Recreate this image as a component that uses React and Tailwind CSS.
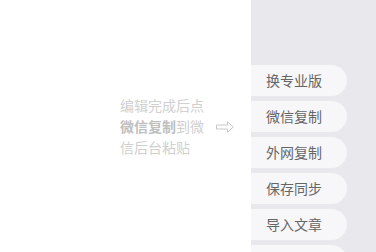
export default function App() {
    const actions = ["换专业版", "微信复制", "外网复制", "保存同步", "导入文章", "更多设置"];

    return (
        <div className="flex h-[252px] w-[376px] overflow-hidden bg-white font-['Noto_Sans_CJK_SC',sans-serif]">
            {/* Editor hint */}
            <div className="flex flex-1 items-start pl-[120px] pt-[95px]">
                <div className="flex items-center gap-[10px]">
                    <p className="w-[86px] text-[14px] leading-[21px] text-[#d0d0d0]">
                        编辑完成后点<span className="font-bold text-[#bfbfbf]">微信复制</span>到微信后台粘贴
                    </p>
                    <svg width="18" height="12" viewBox="0 0 18 12" fill="none" stroke="#c8c8c8" strokeWidth="1">
                        <path d="M0.5 4H11.5V0.8L17.3 6L11.5 11.2V8H0.5Z" />
                    </svg>
                </div>
            </div>

            {/* Side actions */}
            <div className="flex w-[125px] flex-col gap-[5px] bg-[#e8e8ed] pt-[65px]">
                {actions.map((label) => (
                    <button
                        key={label}
                        className="flex h-[31px] w-[96px] shrink-0 items-center rounded-r-full bg-[#f7f7f9] pl-[15px] text-[14px] text-[#666666]"
                    >
                        {label}
                    </button>
                ))}
            </div>
        </div>
    );
}
